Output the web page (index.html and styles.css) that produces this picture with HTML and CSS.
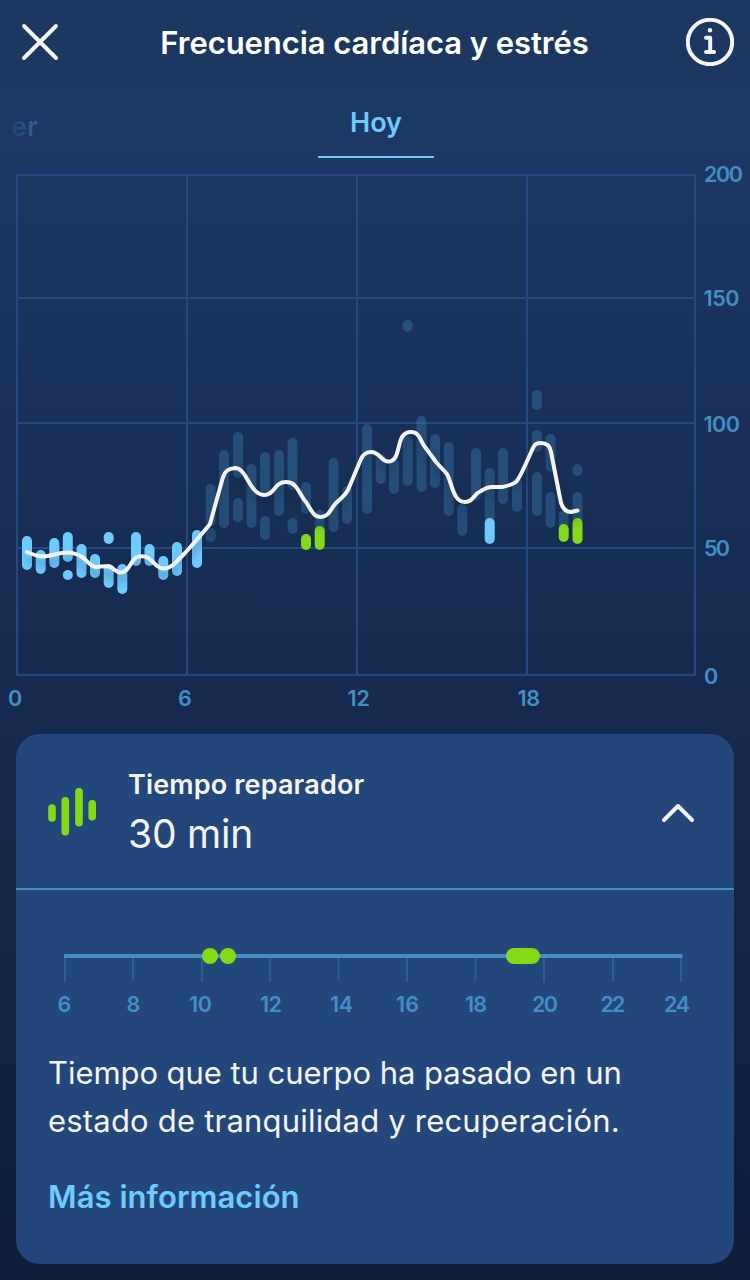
FILE: index.html
```html
<!DOCTYPE html>
<html lang="es">
<head>
    <meta charset="UTF-8">
    <meta name="viewport" content="width=device-width, initial-scale=1.0">
    <title>Frecuencia cardíaca y estrés</title>
    <link rel="stylesheet" href="styles.css">
</head>
<body>

<header class="header">
    <svg class="icon-close" width="40" height="40" viewBox="0 0 40 40">
        <path d="M4 4L36 36M36 4L4 36"/>
    </svg>
    <h1>Frecuencia cardíaca y estrés</h1>
    <svg class="icon-info" width="48" height="48" viewBox="0 0 48 48">
        <circle cx="24" cy="24" r="22.2"/>
        <path d="M20 19.8H24.2V34M20 34H28"/>
        <circle class="dot" cx="24" cy="12.2" r="2.2"/>
    </svg>
</header>

<nav class="tabs">
    <span class="tab-prev">er</span>
    <span class="tab-active">Hoy</span>
</nav>

<!-- Heart rate chart -->
<svg class="chart" width="750" height="576" viewBox="0 158 750 576">
    <path class="grid" d="M17 175H695V675H17ZM187 175V675M357 175V675M527 175V675M17 298H695M17 423H695M17 548H695"/>
    <g id="bars"></g>
    <path class="line" d="M27 552C32 554 37 556.5 42 556.5C51 556.5 58 552.5 67 552.5C73 552.5 77 554 82 557C88 561 90 566.5 96 567C101 567 104 565.5 109 566.5C114 567.5 115 572.5 121 572.5C130 572.5 131 557 139 556.5C153 554 153 568.5 164 568.5C172 568.5 178 560 185 553C194 543 202 534 210 524L223 477C225 471 228 468.5 235 468C247 468 249 494 264 495C275 495 274 482 286 482C298 482 299 495 306 502C312 511 313 517 321 517C329 517 331 508 336 503C342 497 345 496 348 490L361 459C364 453 367 452 371 452C380 452 381 461.5 388 461.5C403 461.5 394 432 411 432C420 432 420 441 425 447L436 462L447 474C452 483 453 502 465 502C474 502 473 494 481 491C484 489 488 487 492 487H502C507 486 512 485 516 482C520 478 528 459 532 450C535 443 537 443 541 443C546 443 550 446 551 452L561 503C563 509 566 512 571 512L577.5 510.5"/>
    <g class="axis">
        <text x="704" y="182" textLength="39">200</text>
        <text x="703.500" y="306" textLength="36">150</text>
        <text x="703.500" y="432" textLength="36.500">100</text>
        <text x="704" y="556" textLength="26">50</text>
        <text x="704" y="684">0</text>
        <text x="8" y="706">0</text>
        <text x="178" y="706">6</text>
        <text x="347.500" y="706" textLength="22.500">12</text>
        <text x="517.500" y="706" textLength="22.500">18</text>
    </g>
</svg>

<section class="card">
    <div class="card-head">
        <svg class="icon-bars" width="48" height="48" viewBox="0 0 48 48">
            <path d="M4 20V30M17.300 12.700V43.700M31 3.700V34.700M44.200 15.700V28.700"/>
        </svg>
        <div class="card-title">
            <h2>Tiempo reparador</h2>
            <p>30 min</p>
        </div>
        <svg class="icon-chevron" width="32" height="20" viewBox="0 0 32 20">
            <path d="M2 17L16 3L30 17"/>
        </svg>
    </div>

    <!-- Restorative time by hour -->
    <svg class="timeline" width="718" height="144" viewBox="16 890 718 144">
        <path class="ticks" d="M65 958V982.500M133 958V981M202 958V982M270 958V982M338.500 958V981M407 958V982M475.500 958V981M544 958V982M613 958V982M681 958V982"/>
        <path class="track" d="M64 956H682.500"/>
        <g class="marks">
            <circle cx="210" cy="956" r="8"/>
            <circle cx="228" cy="956" r="8"/>
            <rect x="506" y="948" width="34" height="16" rx="8"/>
        </g>
        <g class="axis">
            <text x="57.500" y="1012">6</text>
            <text x="126.500" y="1012">8</text>
            <text x="189" y="1012" textLength="23">10</text>
            <text x="260" y="1012" textLength="22">12</text>
            <text x="330" y="1012" textLength="23">14</text>
            <text x="396" y="1012" textLength="23">16</text>
            <text x="465" y="1012" textLength="22">18</text>
            <text x="532" y="1012" textLength="26">20</text>
            <text x="600.500" y="1012" textLength="25">22</text>
            <text x="664" y="1012" textLength="26">24</text>
        </g>
    </svg>

    <div class="card-text">
        <p class="line-one">Tiempo que tu cuerpo ha pasado en un</p>
        <p class="line-two">estado de tranquilidad y recuperación.</p>
        <a>Más información</a>
    </div>
</section>

<script src="script.js"></script>
</body>
</html>
```

FILE: styles.css
```css
body {
    margin: 0;
    height: 1280px;
    overflow: hidden;
    font-family: Inter, "Liberation Sans", sans-serif;
    color: #f4f4f6;
    background: linear-gradient(#1d3a66 86px, #1b3560 240px, #152a4e 700px, #0e1e3b 1280px);
}
h1, h2, p {
    margin: 0;
}
svg {
    display: block;
    fill: none;
    flex-shrink: 0;
}
.header {
    height: 86px;
    box-sizing: border-box;
    padding: 0 16px 2px 20px;
    display: flex;
    align-items: center;
    justify-content: space-between;
    background: #1c3861;
}
.header h1 {
    padding-left: 3px;
    font-size: 31px;
    font-weight: 600;
    letter-spacing: -0.06px;
    white-space: nowrap;
    color: #fff;
}
.icon-close path,
.icon-info path,
.icon-info circle,
.icon-chevron path {
    stroke: #f4f4f6;
    stroke-width: 4;
    stroke-linecap: round;
    stroke-linejoin: round;
}
.icon-info .dot {
    fill: #f4f4f6;
    stroke: none;
}

/* Day tabs */
.tabs {
    height: 72px;
    display: grid;
    grid-template-columns: 318px 116px 1fr;
}
.tab-prev {
    padding: 24px 0 0 11px;
    justify-self: start;
    font-size: 27px;
    line-height: 34px;
    font-weight: 600;
    color: transparent;
    background: linear-gradient(90deg, #1f426f 11px, #326596 37px);
    background-clip: text;
    -webkit-background-clip: text;
}
.tab-active {
    box-sizing: border-box;
    padding-top: 20px;
    border-bottom: 2px solid #6ecbff;
    text-align: center;
    font-size: 27px;
    line-height: 34px;
    font-weight: 600;
    color: #6ecbff;
}

/* Chart */
.grid {
    stroke: #234980;
    stroke-width: 2;
}
.dim {
    fill: #3c87b8;
    fill-opacity: 0.36;
}
.calm {
    fill: #6ecbff;
}
.rest {
    fill: #84da16;
}
.line {
    stroke: #f4f4f6;
    stroke-width: 4;
    stroke-linecap: round;
    stroke-linejoin: round;
    filter: drop-shadow(0 7px 4px rgba(18, 38, 72, 0.4));
}
.axis text {
    font-size: 21.5px;
    font-weight: 600;
    fill: #448ec6;
}

/* Card */
.card {
    height: 530px;
    margin: 0 16px;
    border-radius: 24px;
    background: #23477a;
}
.card-head {
    height: 156px;
    box-sizing: border-box;
    padding: 2px 40px 0 32px;
    display: flex;
    align-items: center;
    border-bottom: 2px solid #448ec6;
}
.icon-bars path {
    stroke: #84da16;
    stroke-width: 7.6;
    stroke-linecap: round;
}
.card-title {
    flex: 1;
    margin-left: 32px;
    padding-top: 4px;
}
.card-title h2 {
    font-size: 27px;
    line-height: 39px;
    font-weight: 600;
    letter-spacing: 0.15px;
}
.card-title p {
    font-size: 39px;
    line-height: 60px;
    font-weight: 400;
    letter-spacing: -0.2px;
}
.icon-chevron {
    margin-top: 2px;
}
.marks {
    fill: #84da16;
}
.track {
    stroke: #448ec6;
    stroke-width: 4;
}
.ticks {
    stroke: #2c5d93;
    stroke-width: 2;
}
.card-text {
    padding: 15px 32px 0;
    font-size: 31px;
    line-height: 48px;
    font-weight: 400;
    white-space: nowrap;
}
.line-one {
    letter-spacing: -0.06px;
}
.line-two {
    letter-spacing: 0.2px;
}
.card-text a {
    display: block;
    margin-top: 28px;
    font-weight: 600;
    letter-spacing: 0.05px;
    color: #6ecbff;
}
```

FILE: script.js
```javascript
// [x center, top, bottom] per heart rate range
const ranges = {
    dim: [
        [210.7, 484, 526], [210.7, 528, 542], [224, 450, 528], [238, 432, 478], [238, 498, 522],
        [251.5, 464, 528], [265, 452, 494], [265, 516, 540], [279, 450, 516], [292.5, 438, 490],
        [292.5, 518, 534], [306, 482, 514], [319.7, 510, 534], [333.5, 458, 532], [347, 486, 524],
        [367, 424, 514], [380.7, 454, 484], [394, 458, 494], [407.7, 320, 332], [407.7, 436, 486],
        [421.5, 416, 492], [435, 434, 488], [448.7, 442, 516], [462.3, 504, 536], [476, 448, 500],
        [489.7, 468, 522], [503, 448, 504], [517, 478, 512], [537, 390, 410], [537, 430, 452],
        [537, 472, 516], [550.5, 434, 472], [550.5, 492, 528], [563.7, 510, 530],
        [577.5, 464, 476], [577.5, 492, 524]
    ],
    calm: [
        [27, 536, 570], [40.7, 550, 574], [54.3, 538, 568], [67.8, 532, 562], [67.8, 570, 580],
        [81.5, 544, 578], [95, 554, 578], [108.7, 532, 544], [108.7, 564, 588], [122.3, 564, 594],
        [136, 532, 566], [149.5, 544, 566], [163.3, 556, 580], [177, 542, 576], [197, 530, 568],
        [489.7, 518, 544]
    ],
    rest: [
        [306, 534, 550], [319.7, 526, 550], [563.7, 524, 542], [577.5, 518, 544]
    ]
};

const bars = document.getElementById("bars");
Object.keys(ranges).forEach((type) => {
    ranges[type].forEach(([x, top, bottom]) => {
        const rect = document.createElementNS("http://www.w3.org/2000/svg", "rect");
        rect.setAttribute("class", type);
        rect.setAttribute("x", x - 5);
        rect.setAttribute("y", top);
        rect.setAttribute("width", 10);
        rect.setAttribute("height", bottom - top);
        rect.setAttribute("rx", 5);
        bars.appendChild(rect);
    });
});
```
